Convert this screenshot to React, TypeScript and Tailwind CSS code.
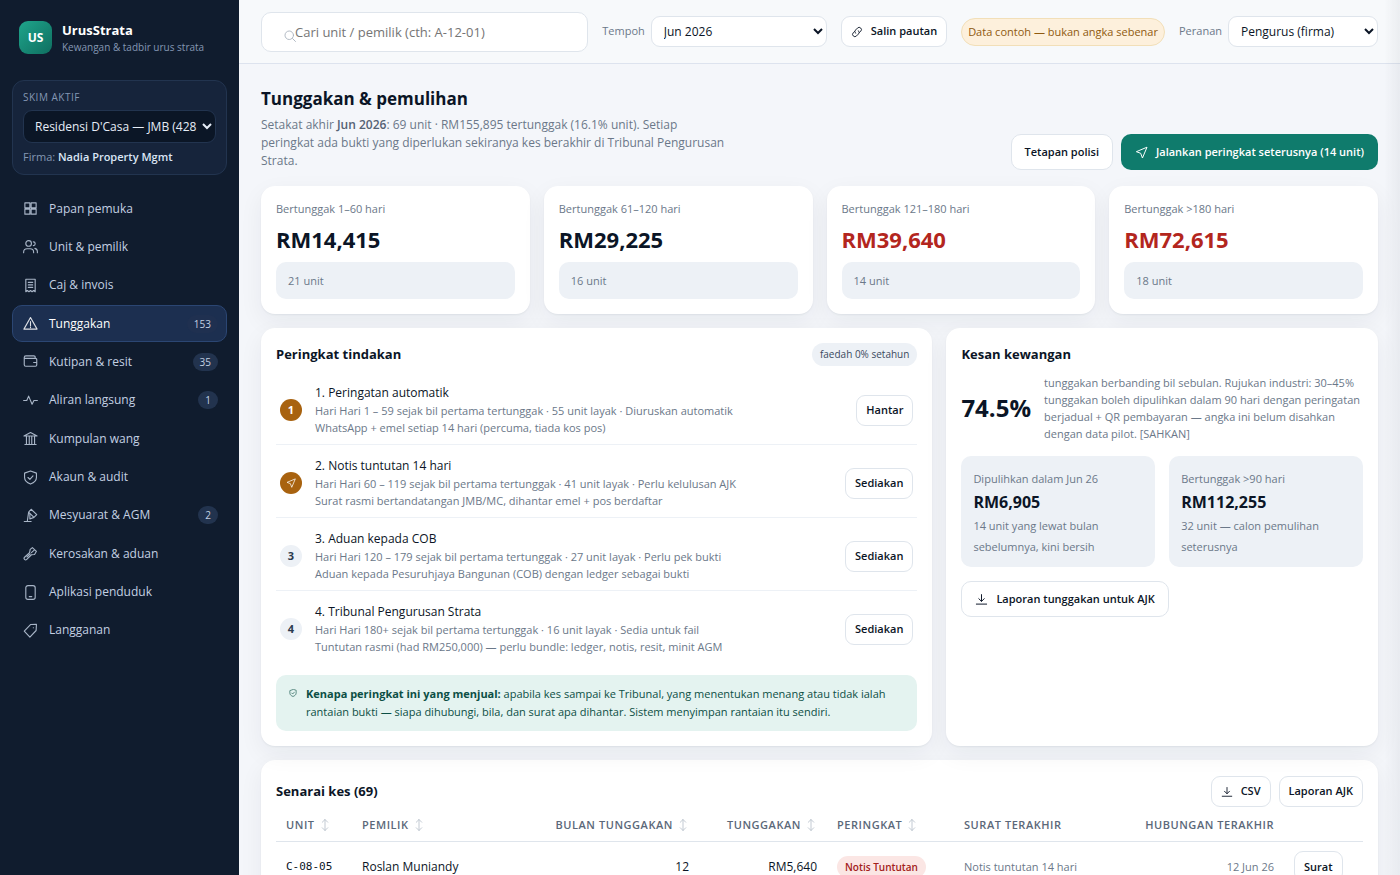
import type { ReactNode } from "react";

type IconName =
  | "grid" | "users" | "receipt" | "alert" | "wallet" | "pulse" | "bank" | "shield"
  | "gavel" | "wrench" | "phone" | "tag" | "link" | "send" | "download" | "search" | "sort";

const shapes: Record<IconName, ReactNode> = {
  grid: <path d="M3 3h8v8H3zM13 3h8v8h-8zM3 13h8v8H3zM13 13h8v8h-8z" />,
  users: (
    <>
      <circle cx="9" cy="7" r="4.5" />
      <path d="M1 22v-1a5.500 5.500 0 0 1 5.500-5.500h5A5.500 5.500 0 0 1 17 21v1M16.500 4.500a3 3 0 0 1 0 6M19 15a5.500 5.500 0 0 1 4 5.500V22" />
    </>
  ),
  receipt: <path d="M4.500 2h15v20L17 20l-2.500 2-2.500-2-2.500 2L7 20l-2.500 2zM8.500 7h7M8.500 11h7M8.500 15h7" />,
  alert: <path d="M12 2.500 22.500 21h-21zM12 9v6.500M12 17.500v1" />,
  wallet: <path d="M19.500 7V5a2 2 0 0 0-2-2H4.500A2.500 2.500 0 0 0 2 5.500V17a2.500 2.500 0 0 0 2.500 2.500H20a2 2 0 0 0 2-2V9a2 2 0 0 0-2-2H4.500A2 2 0 0 1 2 5.500M22 13.500h-5" />,
  pulse: <path d="M1 12h5l3-7 5.500 13 3-6H23" />,
  bank: <path d="M1.500 8 12 2.500 22.500 8zM3 21.500h18M5.500 8.500v12.500M10 8.500v12.500M14 8.500v12.500M18.500 8.500v12.500" />,
  shield: <path d="M12 1.500 2.500 5v7c0 5.500 4.500 8.500 9.500 10.500 5-2 9.500-5 9.500-10.500V5zM8 12l3 3 5-5.500" />,
  gavel: <path d="m13 2 9 8.500-4.500 4.500L9 6.500zM9 6.500l-2 14M17.500 15 11 17.500V9M2 21.500h11" />,
  wrench: <path d="M11.500 5.500 15 2.500l6.500 6-3 5-5 .500-7.500 7.500a2.300 2.300 0 0 1-3.500-3.500L10.500 10.500zM17.500 7l-4 3.500M6.500 17.500l5-5" />,
  phone: (
    <>
      <rect x="4.500" y="1" width="15" height="22" rx="3.500" />
      <path d="M10 18.500h4" />
    </>
  ),
  tag: <path d="M2 13 12 2.500l9.500-.500-.500 10L11 22.500zM16.500 7.500h.200" />,
  link: <path d="M9 14.500a4.500 4.500 0 0 1 0-6.400l4-4a4.500 4.500 0 0 1 6.500 6.400L17 13M15 9.500a4.500 4.500 0 0 1 0 6.400l-4 4a4.500 4.500 0 0 1-6.500-6.400L7 11" />,
  send: <path d="M21.500 2.500 2.500 10.500l8 3 3 8z" />,
  download: <path d="M12 3v12M7 10.500l5 5 5-5M2.500 20.500h19" />,
  search: (
    <>
      <circle cx="10.500" cy="10.500" r="8.500" />
      <path d="m17 17 6 6" />
    </>
  ),
  sort: <path d="M12 1v22M6.500 6.500 12 1l5.500 5.500M6.500 17.500 12 23l5.500-5.500" />,
};

function Icon({ name, className }: { name: IconName; className: string }) {
  return (
    <svg
      viewBox="0 0 24 24"
      fill="none"
      stroke="currentColor"
      strokeWidth="1.8"
      strokeLinecap="round"
      strokeLinejoin="round"
      aria-hidden="true"
      className={`shrink-0 ${className}`}
    >
      {shapes[name]}
    </svg>
  );
}

const nav: { icon: IconName; label: string; count?: number; active?: boolean }[] = [
  { icon: "grid", label: "Papan pemuka" },
  { icon: "users", label: "Unit & pemilik" },
  { icon: "receipt", label: "Caj & invois" },
  { icon: "alert", label: "Tunggakan", count: 153, active: true },
  { icon: "wallet", label: "Kutipan & resit", count: 35 },
  { icon: "pulse", label: "Aliran langsung", count: 1 },
  { icon: "bank", label: "Kumpulan wang" },
  { icon: "shield", label: "Akaun & audit" },
  { icon: "gavel", label: "Mesyuarat & AGM", count: 2 },
  { icon: "wrench", label: "Kerosakan & aduan" },
  { icon: "phone", label: "Aplikasi penduduk" },
  { icon: "tag", label: "Langganan" },
];

const buckets = [
  { label: "Bertunggak 1–60 hari", value: "RM14,415", units: "21 unit", late: false },
  { label: "Bertunggak 61–120 hari", value: "RM29,225", units: "16 unit", late: false },
  { label: "Bertunggak 121–180 hari", value: "RM39,640", units: "14 unit", late: true },
  { label: "Bertunggak >180 hari", value: "RM72,615", units: "18 unit", late: true },
];

const steps: { mark: ReactNode; reached: boolean; title: string; meta: string; note: string; action: string }[] = [
  {
    mark: "1",
    reached: true,
    title: "1. Peringatan automatik",
    meta: "Hari Hari 1 – 59 sejak bil pertama tertunggak · 55 unit layak · Diuruskan automatik",
    note: "WhatsApp + emel setiap 14 hari (percuma, tiada kos pos)",
    action: "Hantar",
  },
  {
    mark: <Icon name="send" className="size-[10px]" />,
    reached: true,
    title: "2. Notis tuntutan 14 hari",
    meta: "Hari Hari 60 – 119 sejak bil pertama tertunggak · 41 unit layak · Perlu kelulusan AJK",
    note: "Surat rasmi bertandatangan JMB/MC, dihantar emel + pos berdaftar",
    action: "Sediakan",
  },
  {
    mark: "3",
    reached: false,
    title: "3. Aduan kepada COB",
    meta: "Hari Hari 120 – 179 sejak bil pertama tertunggak · 27 unit layak · Perlu pek bukti",
    note: "Aduan kepada Pesuruhjaya Bangunan (COB) dengan ledger sebagai bukti",
    action: "Sediakan",
  },
  {
    mark: "4",
    reached: false,
    title: "4. Tribunal Pengurusan Strata",
    meta: "Hari Hari 180+ sejak bil pertama tertunggak · 16 unit layak · Sedia untuk fail",
    note: "Tuntutan rasmi (had RM250,000) — perlu bundle: ledger, notis, resit, minit AGM",
    action: "Sediakan",
  },
];

const results = [
  { label: "Dipulihkan dalam Jun 26", value: "RM6,905", note: "14 unit yang lewat bulan sebelumnya, kini bersih" },
  { label: "Bertunggak >90 hari", value: "RM112,255", note: "32 unit — calon pemulihan seterusnya" },
];

const columns = [
  { label: "Unit", width: "w-[76px]", right: false, sort: true },
  { label: "Pemilik", width: "w-[184px]", right: false, sort: true },
  { label: "Bulan tunggakan", width: "w-[163px]", right: true, sort: true },
  { label: "Tunggakan", width: "w-[128px]", right: true, sort: true },
  { label: "Peringkat", width: "w-[127px]", right: false, sort: true },
  { label: "Surat terakhir", width: "w-[170px]", right: false, sort: false },
  { label: "Hubungan terakhir", width: "w-[160px]", right: true, sort: false },
];

const cardClass =
  "rounded-[14px] bg-white p-[15px] shadow-[0_1px_2px_rgba(15,27,45,0.06),0_8px_24px_rgba(15,27,45,0.06)]";

function Button({ children, size = "sm" }: { children: ReactNode; size?: "sm" | "md" | "primary" }) {
  const look = {
    sm: "h-[31px] rounded-[9px] border border-[#dfe5ec] bg-white px-[9px] text-[#0b1526]",
    md: "h-9 rounded-[10px] border border-[#dfe5ec] bg-white px-[13px] text-[#0b1526]",
    primary: "h-9 rounded-[10px] bg-[#0f7b6c] px-[14px] text-white",
  }[size];
  return (
    <button
      type="button"
      className={`flex shrink-0 items-center justify-center gap-2 text-[11px] font-semibold whitespace-nowrap ${look}`}
    >
      {children}
    </button>
  );
}

function Sidebar() {
  return (
    <aside className="flex w-[239px] shrink-0 flex-col bg-[#101c2e] px-3 pt-[21px]">
      <div className="flex h-[33px] items-center gap-[10px] pl-[7px]">
        <div className="flex size-[33px] items-center justify-center rounded-[9px] bg-linear-to-br from-[#1fa58c] to-[#0f6f60] text-[12px] font-bold text-white">
          US
        </div>
        <div>
          <div className="text-[13px] leading-[18px] font-bold text-white">UrusStrata</div>
          <div className="text-[10px] leading-4 text-[#8497b3]">Kewangan &amp; tadbir urus strata</div>
        </div>
      </div>

      <div className="mt-[26px] rounded-[12px] border border-[#22344f] bg-[#16243b] px-[10px] pt-2 pb-[9px]">
        <label htmlFor="skim" className="block text-[10px] leading-4 tracking-wider text-[#8497b3] uppercase">
          Skim aktif
        </label>
        <select
          id="skim"
          className="mt-[5px] h-[33px] w-full rounded-[9px] border border-[#22344f] bg-[#0b1626] pr-0 pl-[7px] text-[12px] text-[#e6edf7]"
        >
          <option>Residensi D'Casa — JMB (428 unit)</option>
        </select>
        <div className="mt-[6px] text-[11px] leading-4 text-[#8497b3]">
          Firma: <b className="font-semibold text-[#dbe6f5]">Nadia Property Mgmt</b>
        </div>
      </div>

      <nav className="mt-[15px] flex h-[459px] shrink-0 flex-col justify-between">
        {nav.map((item) => (
          <a
            key={item.label}
            href="#"
            aria-current={item.active ? "page" : undefined}
            className={`flex h-[37px] items-center rounded-[10px] border pr-2 pl-[10px] text-[12px] ${
              item.active ? "border-[#2b4673] bg-[#1c2f50] text-white" : "border-transparent text-[#c3d0e2]"
            }`}
          >
            <Icon name={item.icon} className="mr-[11px] size-[15px] opacity-85" />
            <span className="flex-1">{item.label}</span>
            {item.count !== undefined && (
              <span
                className={`rounded-full px-[7px] text-[10px] leading-[18px] text-[#c3d0e2] ${
                  item.active ? "bg-[#1f3050]" : "bg-[#22334e]"
                }`}
              >
                {item.count}
              </span>
            )}
          </a>
        ))}
      </nav>
    </aside>
  );
}

function Topbar() {
  const selectClass = "h-[31px] rounded-[9px] border border-[#dfe5ec] bg-white px-2 text-[12px] text-[#0b1526]";
  return (
    <header className="flex h-16 shrink-0 items-center gap-[14px] border-b border-[#dde3ee] bg-[#f7f9fb] px-[22px]">
      <div className="relative flex-1">
        <Icon name="search" className="absolute top-[18px] left-[23px] size-3 text-[#a9b2bd]" />
        <input
          type="search"
          aria-label="Cari unit atau pemilik"
          placeholder="Cari unit / pemilik (cth: A-12-01)"
          className="h-10 w-full rounded-[10px] border border-[#dfe5ec] bg-white pr-3 pl-[33px] text-[13px] placeholder:text-[#757575]"
        />
      </div>
      <label className="flex items-center gap-[6px] text-[11px] text-[#6b7889]">
        Tempoh
        <select className={`w-[176px] ${selectClass}`}>
          <option>Jun 2026</option>
        </select>
      </label>
      <Button>
        <Icon name="link" className="size-3" />
        Salin pautan
      </Button>
      <span className="rounded-full border border-[#f2dfb8] bg-[#fdf0dc] px-[6px] text-[11px] leading-[26px] whitespace-nowrap text-[#8f5a10]">
        Data contoh — bukan angka sebenar
      </span>
      <label className="flex items-center gap-[6px] text-[11px] text-[#6b7889]">
        Peranan
        <select className={`w-[150px] ${selectClass}`}>
          <option>Pengurus (firma)</option>
        </select>
      </label>
    </header>
  );
}

function Stages() {
  return (
    <section className={cardClass}>
      <div className="flex h-[23px] items-center justify-between">
        <h2 className="text-[13px] font-bold">Peringkat tindakan</h2>
        <span className="rounded-full bg-[#edf1f6] px-2 text-[10px] leading-[23px] font-medium text-[#3b4a5e]">
          faedah 0% setahun
        </span>
      </div>
      <ol className="mt-[6px] divide-y divide-[#edf1f6]">
        {steps.map((step) => (
          <li key={step.title} className="flex items-center gap-[13px] px-1 pt-3 pb-2">
            <span
              className={`flex size-[22px] shrink-0 items-center justify-center rounded-full text-[11px] font-bold ${
                step.reached ? "bg-[#a8620f] text-white" : "bg-[#edf1f6] text-[#2b3a4e]"
              }`}
            >
              {step.mark}
            </span>
            <div className="flex-1">
              <h3 className="text-[12px] leading-[18px]">{step.title}</h3>
              <p className="text-[11px] leading-[17px] text-[#6b7889]">{step.meta}</p>
              <p className="text-[11px] leading-[17px] text-[#6b7889]">{step.note}</p>
            </div>
            <Button>{step.action}</Button>
          </li>
        ))}
      </ol>
      <div className="mt-3 flex gap-[9px] rounded-[10px] bg-[#e4f3f0] py-[10px] pr-3 pl-[13px] text-[11px] leading-[18px] text-[#0c4f45]">
        <Icon name="shield" className="mt-1 size-2" />
        <p>
          <b className="font-bold">Kenapa peringkat ini yang menjual:</b> apabila kes sampai ke Tribunal, yang
          menentukan menang atau tidak ialah rantaian bukti — siapa dihubungi, bila, dan surat apa dihantar. Sistem
          menyimpan rantaian itu sendiri.
        </p>
      </div>
    </section>
  );
}

function Impact() {
  return (
    <section className={cardClass}>
      <h2 className="text-[13px] leading-[22px] font-bold">Kesan kewangan</h2>
      <div className="mt-[9px] flex items-center gap-[13px]">
        <div className="text-[24px] leading-8 font-bold">74.5%</div>
        <p className="text-[11px] leading-[17px] text-[#6b7889]">
          tunggakan berbanding bil sebulan. Rujukan industri: 30–45% tunggakan boleh dipulihkan dalam 90 hari dengan
          peringatan berjadual + QR pembayaran — angka ini belum disahkan dengan data pilot. [SAHKAN]
        </p>
      </div>
      <div className="mt-[14px] grid grid-cols-2 gap-[14px]">
        {results.map((item) => (
          <div key={item.label} className="rounded-[10px] bg-[#edf1f6] px-3 pt-3 pb-[10px] text-[11px] text-[#6b7889]">
            <div className="leading-[22px]">{item.label}</div>
            <div className="text-[16px] leading-[25px] font-bold text-[#0b1526]">{item.value}</div>
            <p className="leading-[21px]">{item.note}</p>
          </div>
        ))}
      </div>
      <div className="mt-[14px] flex">
        <Button size="md">
          <Icon name="download" className="size-[13px]" />
          Laporan tunggakan untuk AJK
        </Button>
      </div>
    </section>
  );
}

function Cases() {
  return (
    <section className={`mt-[14px] ${cardClass}`}>
      <div className="flex h-8 items-end gap-2">
        <h2 className="flex-1 text-[13px] leading-[31px] font-bold">Senarai kes (69)</h2>
        <Button>
          <Icon name="download" className="size-3" />
          CSV
        </Button>
        <Button>Laporan AJK</Button>
      </div>
      <table className="w-full table-fixed text-[12px]">
        <thead>
          <tr className="border-b border-[#dfe5ec]">
            {columns.map((column) => (
              <th
                key={column.label}
                scope="col"
                className={`h-[34px] px-[10px] pt-[2px] text-[11px] font-semibold tracking-wider whitespace-nowrap text-[#5b6879] uppercase ${
                  column.width
                } ${column.right ? "text-right" : "text-left"}`}
              >
                <span className="inline-flex items-center gap-1">
                  {column.label}
                  {column.sort && <Icon name="sort" className="size-3 text-[#bcc4ce]" />}
                </span>
              </th>
            ))}
            <th className="w-[79px]" aria-label="Tindakan" />
          </tr>
        </thead>
        <tbody>
          <tr className="h-[51px] whitespace-nowrap">
            <td className="px-[10px] font-['DejaVu_Sans_Mono',monospace] text-[11px]">C-08-05</td>
            <td className="px-[10px]">Roslan Muniandy</td>
            <td className="px-[10px] text-right">12</td>
            <td className="px-[10px] text-right">RM5,640</td>
            <td className="px-[10px]">
              <span className="inline-block rounded-full bg-[#fbe6e4] px-2 text-[10px] leading-[22px] font-semibold text-[#a3211b]">
                Notis Tuntutan
              </span>
            </td>
            <td className="px-[10px] text-[11px] text-[#6b7889]">Notis tuntutan 14 hari</td>
            <td className="px-[10px] text-right text-[11px] text-[#6b7889]">12 Jun 26</td>
            <td className="px-[10px]">
              <Button>Surat</Button>
            </td>
          </tr>
        </tbody>
      </table>
    </section>
  );
}

export default function App() {
  return (
    <div className="flex h-screen overflow-hidden bg-[#f4f6fa] font-['Open_Sans','Noto_Sans',sans-serif] text-[#0b1526]">
      <Sidebar />
      <div className="flex min-w-0 flex-1 flex-col">
        <Topbar />
        <main className="flex-1 overflow-y-auto px-[22px] pt-[23px] pb-6 [scrollbar-width:none]">
          <div className="flex items-end justify-between gap-4">
            <div className="max-w-[470px]">
              <h1 className="text-[17px] leading-6 font-bold">Tunggakan &amp; pemulihan</h1>
              <p className="mt-[5px] text-[12px] leading-[18px] text-[#6b7889]">
                Setakat akhir <b className="font-semibold text-[#556274]">Jun 2026</b>: 69 unit · RM155,895 tertunggak
                (16.1% unit). Setiap peringkat ada bukti yang diperlukan sekiranya kes berakhir di Tribunal Pengurusan
                Strata.
              </p>
            </div>
            <div className="flex gap-2">
              <Button size="md">Tetapan polisi</Button>
              <Button size="primary">
                <Icon name="send" className="size-[13px]" />
                Jalankan peringkat seterusnya (14 unit)
              </Button>
            </div>
          </div>

          <div className="mt-4 grid grid-cols-4 gap-[14px]">
            {buckets.map((bucket) => (
              <section key={bucket.label} className={cardClass}>
                <h2 className="text-[11px] leading-4 text-[#6b7889]">{bucket.label}</h2>
                <div className={`mt-[6px] text-[22px] leading-8 font-bold ${bucket.late ? "text-[#b3261e]" : ""}`}>
                  {bucket.value}
                </div>
                <div className="mt-[7px] rounded-[10px] bg-[#edf1f6] px-3 text-[11px] leading-[37px] text-[#6b7889]">
                  {bucket.units}
                </div>
              </section>
            ))}
          </div>

          <div className="mt-[14px] grid grid-cols-[14fr_9fr] gap-[14px]">
            <Stages />
            <Impact />
          </div>

          <Cases />
        </main>
      </div>
      <div className="pointer-events-none fixed inset-y-0 right-0 w-4 bg-linear-to-r from-transparent to-[#0f1b2d]/5" />
    </div>
  );
}
